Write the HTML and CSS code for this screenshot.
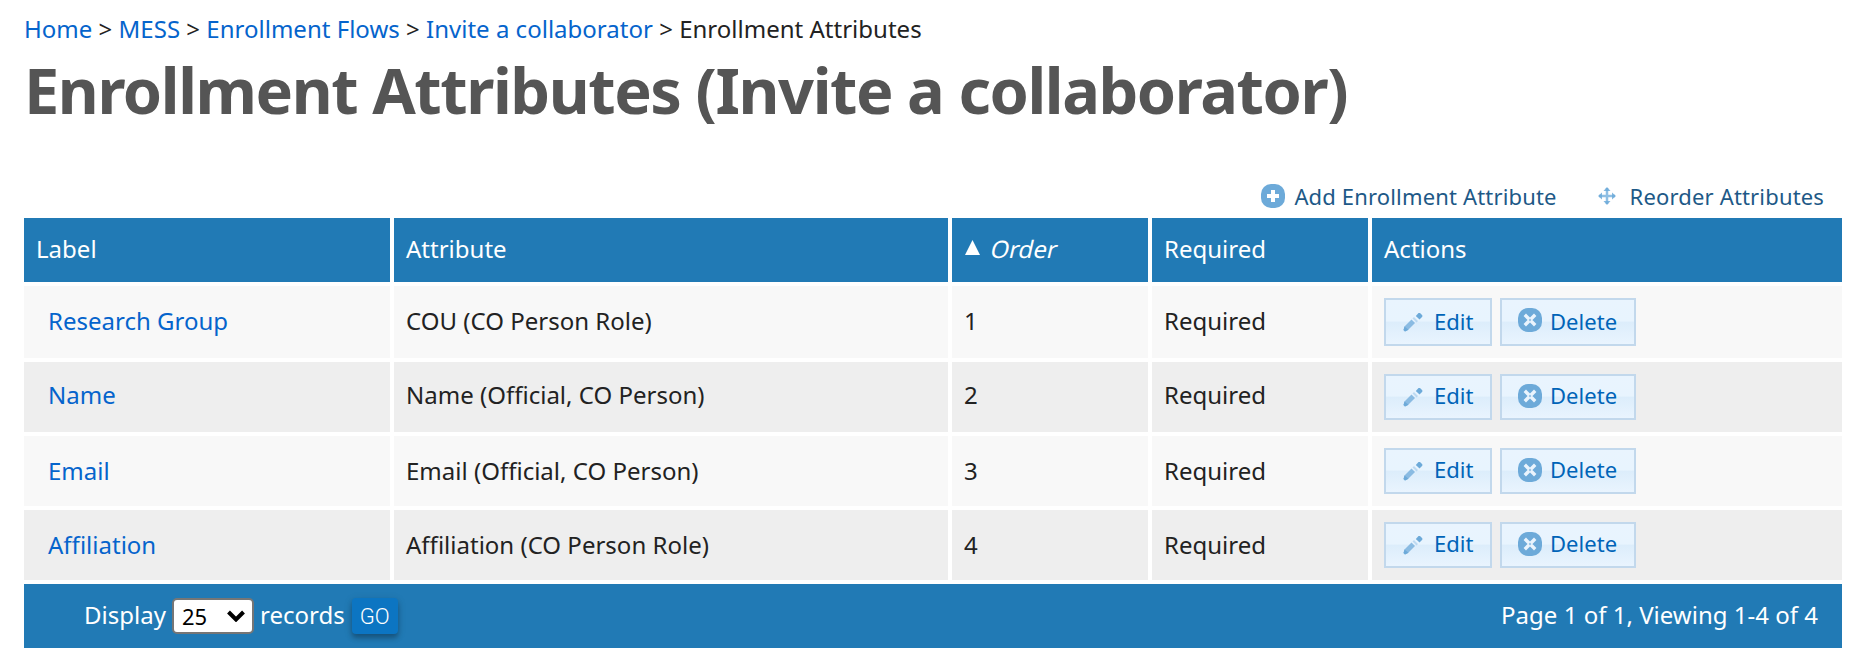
FILE: index.html
```html
<!DOCTYPE html>
<html lang="en">
<head>
<meta charset="utf-8">
<title>Enrollment Attributes (Invite a collaborator)</title>
<link rel="stylesheet" href="styles.css">
</head>
<body>
<svg class="sprite" width="0" height="0">
  <symbol id="i-pencil" viewBox="0 0 20 20"><path d="M.5 18l1-3.500 7-7 3.500 3.500-7 7-3 1.500z" opacity=".75"/><path d="M.5 18l1-3.500 4 3.300-3.500 1.700z"/><path d="M9.500 6.500l1.500-1.500 4 4-1.500 1.500z" opacity=".35"/><path d="M12.800 4l2.700-3h1.500l2.300 2.300v1.500l-2.800 2.700z"/></symbol>
  <symbol id="i-delete" viewBox="0 0 24 24"><rect width="24" height="24" rx="10"/><path d="M8 8l8 8M16 8l-8 8" stroke="#eaf4fd" stroke-width="3.400" stroke-linecap="square"/><circle cx="12" cy="12" r="1.200" opacity=".6"/></symbol>
  <symbol id="i-plus" viewBox="0 0 24 24"><rect width="24" height="24" rx="10"/><path d="M12 6v12M6 12h12" stroke="#fff" stroke-width="4"/></symbol>
  <symbol id="i-move" viewBox="0 0 20 20"><path d="M10 2v16M2 10h16" stroke="#8fbfe4" stroke-width="2.500"/><path d="M10 1l3.500 4h-7zM10 19l3.500-4h-7zM1 10l4-3.500v7zM19 10l-4-3.500v7z" opacity=".85"/></symbol>
</svg>
<nav class="breadcrumbs"><a href="#">Home</a> &gt; <a href="#">MESS</a> &gt; <a href="#">Enrollment Flows</a> &gt; <a href="#">Invite a collaborator</a> &gt; <span>Enrollment Attributes</span></nav>
<h1>Enrollment Attributes (Invite a collaborator)</h1>
<div class="top-links">
  <a href="#"><svg class="icon-circle"><use href="#i-plus"/></svg><span>Add Enrollment Attribute</span></a>
  <a href="#" class="reorder"><svg class="icon-small"><use href="#i-move"/></svg><span>Reorder Attributes</span></a>
</div>
<main class="grid">
  <div class="row head"><div>Label</div><div>Attribute</div><div class="sorted"><svg class="sort" viewBox="0 0 15 15"><path d="M7.500 0L15 15H0z"/></svg><span class="slanted">Order</span></div><div>Required</div><div>Actions</div></div>
  <div class="row first"><div class="label"><a href="#">Research Group</a></div><div>COU (CO Person Role)</div><div>1</div><div>Required</div><div class="actions"><a class="button" href="#"><svg class="icon-small"><use href="#i-pencil"/></svg><span>Edit</span></a><a class="button delete" href="#"><svg class="icon-circle"><use href="#i-delete"/></svg><span>Delete</span></a></div></div>
  <div class="row even second"><div class="label"><a href="#">Name</a></div><div>Name (Official, CO Person)</div><div>2</div><div>Required</div><div class="actions"><a class="button" href="#"><svg class="icon-small"><use href="#i-pencil"/></svg><span>Edit</span></a><a class="button delete" href="#"><svg class="icon-circle"><use href="#i-delete"/></svg><span>Delete</span></a></div></div>
  <div class="row odd"><div class="label"><a href="#">Email</a></div><div>Email (Official, CO Person)</div><div>3</div><div>Required</div><div class="actions"><a class="button" href="#"><svg class="icon-small"><use href="#i-pencil"/></svg><span>Edit</span></a><a class="button delete" href="#"><svg class="icon-circle"><use href="#i-delete"/></svg><span>Delete</span></a></div></div>
  <div class="row even"><div class="label"><a href="#">Affiliation</a></div><div>Affiliation (CO Person Role)</div><div>4</div><div>Required</div><div class="actions"><a class="button" href="#"><svg class="icon-small"><use href="#i-pencil"/></svg><span>Edit</span></a><a class="button delete" href="#"><svg class="icon-circle"><use href="#i-delete"/></svg><span>Delete</span></a></div></div>
  <footer class="pager">
    <span>Display</span>
    <span class="select"><span>25</span><svg viewBox="0 0 18 12"><path d="M1.500 2L9 9.500 16.500 2"/></svg></span>
    <span>records</span>
    <button class="go" type="button">GO</button>
    <span class="count">Page 1 of 1, Viewing 1-4 of 4</span>
  </footer>
</main>
</body>
</html>
```
FILE: styles.css
```css
* { box-sizing: border-box; }
body {
  margin: 0;
  padding: 12px 12px 0 24px;
  background: #fff;
  color: #222;
  font: 24px/34px "Noto Sans", sans-serif;
  letter-spacing: .01px;
  overflow: hidden;
}
a { color: #0564cc; text-decoration: none; }
svg { flex: none; fill: #6daad9; }
.sprite { position: absolute; }
.breadcrumbs { height: 34px; white-space: nowrap; }
h1 {
  margin: 0;
  height: 90px;
  color: #555;
  font-size: 63px;
  line-height: 87px;
  font-weight: 700;
  letter-spacing: -1.420px;
  white-space: nowrap;
}
.top-links {
  display: flex;
  justify-content: flex-end;
  height: 42px;
  margin-top: 40px;
  padding-right: 18px;
  font-size: 22px;
  letter-spacing: .16px;
}
.top-links a { display: flex; align-items: center; height: 39px; color: #1d5987; gap: 9px; }
.top-links .reorder { margin-left: 40px; gap: 13px; }
.icon-circle { width: 24px; height: 24px; }
.icon-small { width: 20px; height: 20px; }
.grid { display: flex; flex-direction: column; gap: 4px; }
.row {
  display: grid;
  grid-template-columns: 366px 554px 196px 216px 470px;
  gap: 4px;
  height: 70px;
}
.row > div { display: flex; align-items: center; padding: 0 12px; background: #f8f8f8; }
.row .label { padding-left: 24px; }
.row.even > div { background: #eee; }
.row.first { height: 72px; }
.row.head { height: 64px; color: #fff; }
.row.head > div { background: #217ab5; }
.row.head > div, .row.first > div:not(.actions) { padding-bottom: 2px; }
.row.second > div:not(.actions) { padding-bottom: 4px; }
.sort { width: 15px; height: 15px; margin: -4px 11px 0 1px; fill: #fff; }
.slanted { transform: skewX(-13deg); }
.row .actions { gap: 8px; }
.button {
  display: flex;
  align-items: center;
  width: 108px;
  height: 46px;
  padding-left: 17px;
  gap: 11px;
  border: 2px solid #c2d8ec;
  background: linear-gradient(#e9f4fe 0%, #e8f4fe 48%, #dcedfb 50%, #e9f4fe 100%);
  color: #0064b8;
  font-size: 22px;
  letter-spacing: .05px;
}
.button span { padding-bottom: 4px; }
.first .button { height: 48px; }
.first .button span { padding-bottom: 2px; }
.button.delete { width: 136px; padding-left: 16px; gap: 8px; }
.first .button.delete svg { margin-top: -4px; }
.button.delete svg { margin-top: -2px; }
.pager {
  display: flex;
  align-items: center;
  height: 64px;
  padding: 0 24px 2px 60px;
  background: #217ab5;
  color: #fff;
}
.select {
  display: flex;
  align-items: center;
  justify-content: space-between;
  width: 82px;
  height: 36px;
  margin: 2px 6px 0 6px;
  padding: 0 7px 0 8px;
  border: 2px solid #767676;
  border-radius: 5px;
  background: #fff;
  color: #000;
  font-size: 22px;
}
.select svg { width: 18px; height: 12px; fill: none; stroke: #000; stroke-width: 4; }
.go {
  width: 46px;
  height: 36px;
  margin: 2px 0 0 7px;
  padding: 0;
  border: 0;
  border-radius: 4px;
  background: #0c75c2;
  box-shadow: 0 4px 5px rgba(0, 0, 0, .25), 0 2px 10px rgba(0, 0, 0, .12);
  color: #fff;
  font: 300 22px Roboto, sans-serif;
}
.count { margin-left: auto; }
```
